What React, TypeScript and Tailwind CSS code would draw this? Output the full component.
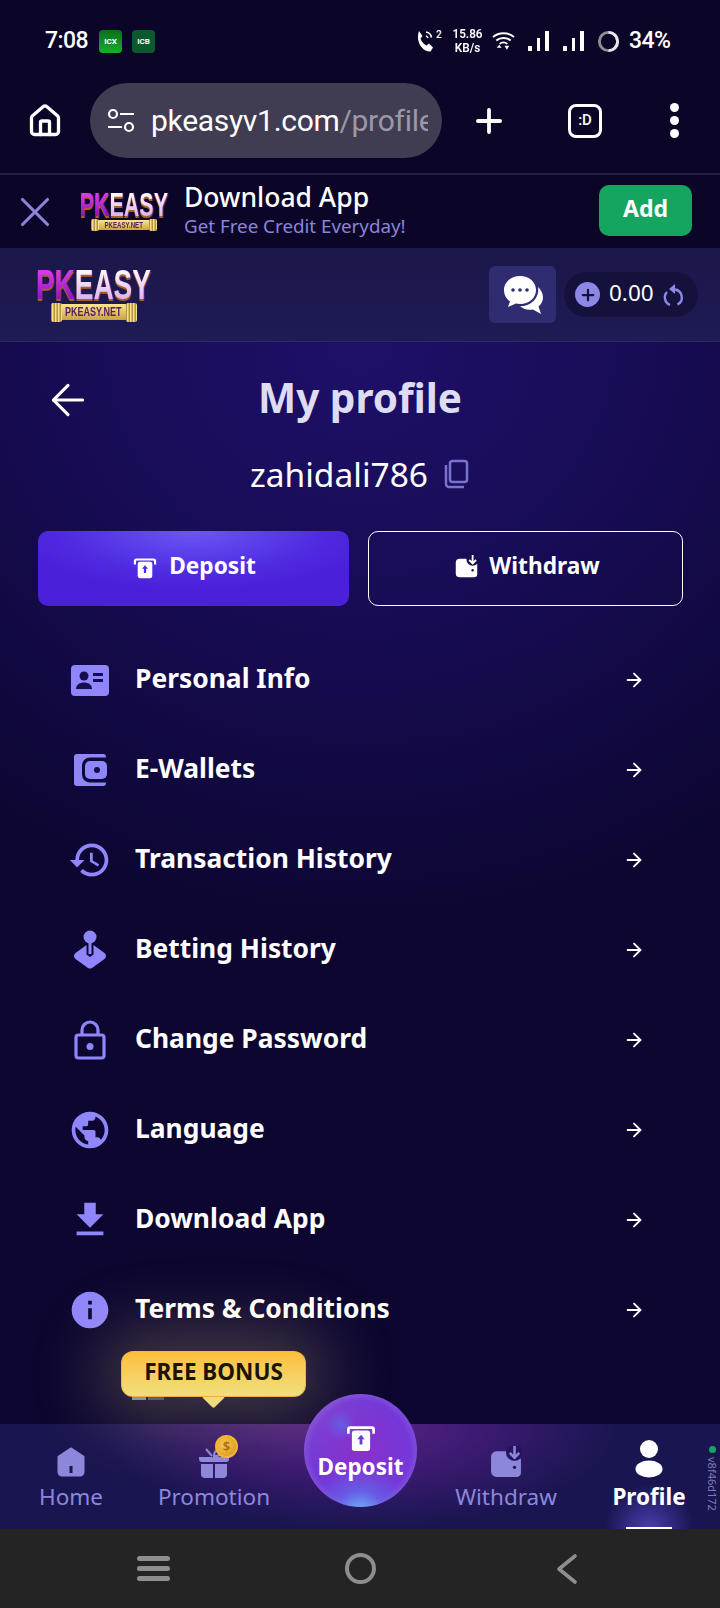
import { Home, Plus, ArrowRight, ArrowLeft, X } from "lucide-react";
import type { ReactNode } from "react";

const NOTO = "font-['Noto_Sans',sans-serif]";

// Ribbed end of the gold bar under the wordmark
function BarCap({ w }: { w: string }) {
  return <span className={`${w} h-full rounded-[2px] bg-[repeating-linear-gradient(90deg,#8f6f22_0px,#f6e08c_1.5px,#c9a440_3px)]`} />;
}

function Logo({ scale }: { scale: "sm" | "lg" }) {
  const lg = scale === "lg";
  return (
    <div className={`flex flex-col items-center ${lg ? "w-[113px]" : "w-[88px]"}`}>
      <div
        className={`flex font-['Liberation_Sans',sans-serif] font-bold scale-x-[0.65] whitespace-nowrap [filter:drop-shadow(0_2px_0_#a8641c)_drop-shadow(1px_0_0_#7a1aa0)] ${
          lg ? "text-[43px] leading-[33px] h-[33px]" : "text-[33px] leading-[25px] h-[25px]"
        }`}
      >
        <span className="bg-gradient-to-b from-[#e23cf5] to-[#8a10b8] bg-clip-text text-transparent">PK</span>
        <span className="bg-gradient-to-b from-white to-[#d9b0ee] bg-clip-text text-transparent">EASY</span>
      </div>
      <div className={`flex items-center ${lg ? "w-[86px] h-[19px] mt-[2px]" : "w-[66px] h-[12px] mt-[2px]"}`}>
        <BarCap w={lg ? "w-[11px]" : "w-[8px]"} />
        <div className="flex-1 h-[85%] flex items-center justify-center overflow-hidden bg-gradient-to-b from-[#f8e690] to-[#c9a440]">
          <span className={`font-['Liberation_Sans',sans-serif] font-bold text-[#5a1a6b] scale-x-[0.72] whitespace-nowrap ${lg ? "text-[12.5px]" : "text-[8.5px]"}`}>
            PKEASY.NET
          </span>
        </div>
        <BarCap w={lg ? "w-[11px]" : "w-[8px]"} />
      </div>
    </div>
  );
}

function Signal() {
  return (
    <div className="flex items-end justify-between h-[20px] w-[21px]">
      <span className="w-[3.5px] h-[5px] bg-white" />
      <span className="w-[3.5px] h-[13px] bg-white" />
      <span className="w-[4px] h-[20px] bg-white" />
    </div>
  );
}

function StatusBar() {
  return (
    <div className="h-[83px] shrink-0 flex items-start justify-between pl-[45px] pr-[50px] pt-[25px] font-['Roboto',sans-serif] text-white">
      <div className="flex items-center h-[32px]">
        <span className="w-[45px] text-[23px] font-medium tracking-tight">7:08</span>
        <span className="w-[23px] h-[23px] ml-[9px] rounded-[4px] bg-gradient-to-b from-[#0a6f1c] to-[#14b02c] text-[8px] font-bold leading-[23px] text-center">ICX</span>
        <span className="w-[23px] h-[23px] ml-[10px] rounded-[4px] bg-[#0b5a2e] text-[8px] font-bold leading-[23px] text-center">ICB</span>
      </div>
      <div className="flex items-center h-[32px]">
        <div className="flex items-start w-[26px]">
          <svg width="20" height="22" viewBox="0 0 20 22" fill="#fff" className="shrink-0">
            <path d="M3 1l3.500 5-2 2.500c1 3 3 5.500 6 7l2.500-2 4 4-2.500 4C7 22-1 12 3 1z" />
            <path d="M10 2c3 .5 5 2.500 5.500 5.500M10 6c1 .3 1.500 1 2 2" fill="none" stroke="#fff" strokeWidth="1.600" />
          </svg>
          <span className="text-[10px] font-medium leading-none">2</span>
        </div>
        <div className="ml-[10px] w-[31px] flex flex-col items-center text-[13px] font-semibold leading-[14px] scale-x-90">
          <span>15.86</span>
          <span>KB/s</span>
        </div>
        <svg width="23" height="22" viewBox="0 0 24 22" fill="none" stroke="#fff" strokeWidth="2" className="ml-[9px]">
          <path d="M1 7c6-5.500 16-5.500 22 0M4.500 10.500c4-3.500 11-3.500 15 0M8 14c2.200-1.800 5.800-1.800 8 0" />
          <path d="M5 18h5l-2.500-3zM13 16h5l-2.500 4z" fill="#fff" stroke="none" />
        </svg>
        <div className="ml-[13px]">
          <Signal />
        </div>
        <div className="ml-[14px]">
          <Signal />
        </div>
        <svg width="23" height="23" viewBox="0 0 24 24" fill="none" strokeWidth="3" className="ml-[13px]">
          <circle cx="12" cy="12" r="9.500" stroke="#8d8d96" />
          <path d="M12 2.500a9.500 9.500 0 0 1 0 19" stroke="#e8e8ee" />
        </svg>
        <span className="ml-[9px] w-[41px] text-[23px] font-medium tracking-tight">34%</span>
      </div>
    </div>
  );
}

function BrowserBar() {
  return (
    <div className="h-[92px] shrink-0 flex items-start border-b-2 border-[#221f43]">
      <div className="w-[90px] h-[75px] flex items-center justify-center">
        <Home className="w-[36px] h-[36px] text-white" strokeWidth={2.2} />
      </div>
      <div className="w-[352px] h-[75px] rounded-full bg-[#403c52] flex items-center pl-[16px] pr-[14px]">
        <svg width="30" height="30" viewBox="0 0 30 30" fill="none" stroke="#fff" strokeWidth="2.200" className="shrink-0">
          <circle cx="7" cy="8" r="4" />
          <path d="M14 8h14M2 21h14" />
          <circle cx="23" cy="21" r="4" />
        </svg>
        <div className="ml-[15px] overflow-hidden whitespace-nowrap font-['Roboto',sans-serif] text-[30px] tracking-[-0.3px] text-white">
          pkeasyv1.com<span className="text-[#9b98a8]">/profile</span>
        </div>
      </div>
      <div className="flex-1 h-[75px] flex items-center">
        <Plus className="w-[38px] h-[38px] ml-[28px] text-white shrink-0" strokeWidth={2.4} />
        <div className="w-[34px] h-[34px] ml-[60px] rounded-[8px] border-[3px] border-white text-white text-[15px] font-['Roboto',sans-serif] font-medium flex items-center justify-center shrink-0">
          :D
        </div>
        <div className="ml-[68px] flex flex-col gap-[4px]">
          <span className="w-[9px] h-[9px] rounded-full bg-white" />
          <span className="w-[9px] h-[9px] rounded-full bg-white" />
          <span className="w-[9px] h-[9px] rounded-full bg-white" />
        </div>
      </div>
    </div>
  );
}

function InstallBanner() {
  return (
    <div className={`h-[73px] shrink-0 flex items-center pl-[10px] pr-[28px] ${NOTO}`}>
      <X className="w-[50px] h-[50px] text-[#8b84d8] shrink-0" strokeWidth={1.5} />
      <div className="ml-[20px]">
        <Logo scale="sm" />
      </div>
      <div className="ml-[16px] flex-1 -mt-[4px]">
        <div className="text-[26.5px] leading-[32px] font-medium text-white">Download App</div>
        <div className="text-[18.8px] leading-[26px] text-[#8b84d8]">Get Free Credit Everyday!</div>
      </div>
      <button className="w-[93px] h-[51px] -mt-[2px] pb-[5px] rounded-[10px] bg-[#16a561] text-white text-[23px] font-bold">Add</button>
    </div>
  );
}

function AppHeader() {
  return (
    <div className={`h-[94px] shrink-0 flex items-center justify-between pl-[37px] pr-[22px] border-b border-[#2c2a66] bg-gradient-to-b from-[#1b1749] to-[#1e1b55] ${NOTO}`}>
      <Logo scale="lg" />
      <div className="flex items-center gap-[8px]">
        <div className="w-[67px] h-[57px] rounded-[6px] bg-[#302c72] flex items-center justify-center">
          <svg width="44" height="42" viewBox="0 0 44 42" fill="#fff">
            <path d="M19 2C10 2 3 8 3 16c0 5 2.500 9 6 11.500L7 33l8-3.500c1.300.3 2.600.5 4 .5 9 0 16-6 16-14S28 2 19 2z" />
            <path d="M37 13c3 3 5 6 5 10.500 0 4-2 7-4.500 9L40 40l-8-4.500c-6 1-10-.5-13-3.500 9 1 20-7 18-19z" />
            <circle cx="12" cy="16" r="1.800" fill="#302c72" />
            <circle cx="19" cy="16" r="1.800" fill="#302c72" />
            <circle cx="26" cy="16" r="1.800" fill="#302c72" />
          </svg>
        </div>
        <div className="w-[134px] h-[45px] rounded-full bg-[#14123c] flex items-center pl-[11px]">
          <span className="w-[25px] h-[25px] rounded-full bg-[#8d87e6] flex items-center justify-center shrink-0">
            <Plus className="w-[18px] h-[18px] text-[#14123c]" strokeWidth={3} />
          </span>
          <span className="ml-[9px] pb-[4px] text-[22.5px] text-white">0.00</span>
          <svg width="24" height="26" viewBox="0 0 24 26" fill="none" stroke="#8d87e6" strokeWidth="2.400" className="ml-[7px] shrink-0">
            <path d="M14 7.500a8 8 0 0 1 2.500 15" />
            <path d="M9 23a8 8 0 0 1-3-13" />
            <path d="M14 2v10l-6-5z" fill="#8d87e6" stroke="none" />
          </svg>
        </div>
      </div>
    </div>
  );
}

const IC = "#8f86fb";

function BadgeIcon() {
  return (
    <svg width="40" height="40" viewBox="0 0 40 40">
      <rect x="1" y="5" width="38" height="31" rx="4" fill={IC} />
      <circle cx="14" cy="16" r="4.500" fill="#170c4f" />
      <path d="M6 29c0-4.500 4-6.500 8-6.500s8 2 8 6.500z" fill="#170c4f" />
      <path d="M23 13h10v3H23zM23 19h10v3H23z" fill="#170c4f" />
    </svg>
  );
}

function WalletIcon() {
  return (
    <svg width="40" height="40" viewBox="0 0 40 40">
      <path d="M7 4h26a3 3 0 0 1 3 3v.5H20a8 8 0 0 0-8 8v9a8 8 0 0 0 8 8h16v.5a3 3 0 0 1-3 3H7a3 3 0 0 1-3-3V7a3 3 0 0 1 3-3z" fill={IC} />
      <rect x="15" y="11" width="22" height="18" rx="5" fill={IC} />
      <circle cx="27" cy="20" r="3" fill="#150b4a" />
    </svg>
  );
}

function JoystickIcon() {
  return (
    <svg width="40" height="40" viewBox="0 0 40 40" fill={IC}>
      <circle cx="20" cy="7" r="6.500" />
      <path d="M18.500 12h3v12h-3z" />
      <path d="M16.500 15v9.500L20 27l3.500-2.500V15l11 8c2 1.300 2 4.500 0 6l-12.500 9c-1.300.7-2.700.7-4 0L5.500 29c-2-1.500-2-4.700 0-6z" />
    </svg>
  );
}

function LockIcon() {
  return (
    <svg width="40" height="40" viewBox="0 0 40 40" fill="none" stroke={IC} strokeWidth="3.200">
      <path d="M12 15V10a8 8 0 0 1 16 0v5" />
      <rect x="6" y="15" width="28" height="23" rx="2.500" />
      <circle cx="20" cy="26.500" r="3.500" fill={IC} stroke="none" />
    </svg>
  );
}

function MuiIcon({ d, size = 44 }: { d: string; size?: number }) {
  return (
    <svg width={size} height={size} viewBox="0 0 24 24" fill={IC}>
      <path d={d} />
    </svg>
  );
}

const HISTORY = "M13 3c-4.970 0-9 4.030-9 9H1l3.890 3.890.07.14L9 12H6c0-3.870 3.130-7 7-7s7 3.130 7 7-3.130 7-7 7c-1.930 0-3.680-.79-4.940-2.060l-1.420 1.420C8.270 19.990 10.510 21 13 21c4.970 0 9-4.030 9-9s-4.030-9-9-9zm-1 5v5l4.280 2.540.72-1.210-3.500-2.080V8H12z";
const GLOBE = "M12 2C6.480 2 2 6.480 2 12s4.480 10 10 10 10-4.480 10-10S17.520 2 12 2zm-1 17.930c-3.950-.49-7-3.850-7-7.930 0-.62.08-1.210.21-1.790L9 15v1c0 1.100.9 2 2 2v1.930zm6.900-2.540c-.26-.81-1-1.390-1.900-1.390h-1v-3c0-.55-.45-1-1-1H8v-2h2c.55 0 1-.45 1-1V7h2c1.100 0 2-.9 2-2v-.41c2.930 1.190 5 4.060 5 7.410 0 2.080-.8 3.970-2.100 5.390z";
const DOWNLOAD = "M19 9h-4V3H9v6H5l7 7 7-7zM5 18v2h14v-2H5z";
const INFO = "M12 2C6.480 2 2 6.480 2 12s4.480 10 10 10 10-4.480 10-10S17.520 2 12 2zm1 15h-2v-6h2v6zm0-8h-2V7h2v2z";

const MENU: { label: string; icon: ReactNode }[] = [
  { label: "Personal Info", icon: <BadgeIcon /> },
  { label: "E-Wallets", icon: <WalletIcon /> },
  { label: "Transaction History", icon: <MuiIcon d={HISTORY} /> },
  { label: "Betting History", icon: <JoystickIcon /> },
  { label: "Change Password", icon: <LockIcon /> },
  { label: "Language", icon: <MuiIcon d={GLOBE} /> },
  { label: "Download App", icon: <MuiIcon d={DOWNLOAD} size={46} /> },
  { label: "Terms & Conditions", icon: <MuiIcon d={INFO} /> },
];

function DepositGlyph({ size, color }: { size: number; color: string }) {
  return (
    <svg width={size} height={size} viewBox="0 0 28 28">
      <path d="M1 11V7a3 3 0 0 1 3-3h20a3 3 0 0 1 3 3v4h-2.500V7.500a1 1 0 0 0-1-1h-19a1 1 0 0 0-1 1V11z" fill="#fff" />
      <rect x="5.500" y="8" width="17" height="19" rx="2.500" fill="#fff" />
      <path d="M14 12l-3.500 4h2.200v5h2.600v-5h2.200z" fill={color} />
    </svg>
  );
}

function WithdrawGlyph({ size, fill, cut }: { size: number; fill: string; cut: string }) {
  return (
    <svg width={size} height={size} viewBox="0 0 30 30">
      <path d="M1 10a5 5 0 0 1 5-5h9l5 3h5a4 4 0 0 1 4 4v13a4 4 0 0 1-4 4H6a5 5 0 0 1-5-5z" fill={fill} />
      <circle cx="23" cy="6" r="8" fill={cut} />
      <path d="M23 0v10M18.500 6.500l4.500 4.500 4.500-4.500" fill="none" stroke={fill} strokeWidth="2.400" />
      <circle cx="23" cy="20" r="1.600" fill={cut} />
    </svg>
  );
}

function ProfileContent() {
  return (
    <div className={`relative flex-1 min-h-0 overflow-hidden bg-[radial-gradient(ellipse_90%_55%_at_50%_0%,#1e1068_0%,#170c55_45%,#0c0630_100%)] bg-[#0c0630] ${NOTO}`}>
      <div className="flex items-center justify-center h-[112px] relative">
        <ArrowLeft className="absolute left-[43px] top-[33px] w-[50px] h-[50px] text-white" strokeWidth={1.5} />
        <h1 className="text-[40.5px] font-bold text-[#dedcf2]">My profile</h1>
      </div>
      <div className="flex items-center justify-center h-[40px]">
        <span className="text-[33.5px] text-white">zahidali786</span>
        <svg width="26" height="30" viewBox="0 0 26 30" fill="none" stroke="#7a72cf" strokeWidth="2.500" className="ml-[16px]">
          <rect x="6" y="2" width="17" height="21" rx="2.500" />
          <path d="M2 6v19a3 3 0 0 0 3 3h15" />
        </svg>
      </div>
      <div className="flex gap-[19px] pl-[38px] pr-[37px] mt-[37px]">
        <button className="flex-1 h-[75px] pb-[4px] pl-[2px] rounded-[10px] bg-[radial-gradient(ellipse_60%_80%_at_50%_0%,#6a57f5_0%,#4f2ae0_70%,#4a20d8_100%)] flex items-center justify-center gap-[12px] text-white text-[22.7px] font-bold">
          <DepositGlyph size={24} color="#4f2ae0" />
          Deposit
        </button>
        <button className="flex-1 h-[75px] pb-[4px] pl-[4px] rounded-[10px] border border-white flex items-center justify-center gap-[11px] text-white text-[22.7px] font-bold">
          <WithdrawGlyph size={23} fill="#fff" cut="#170c55" />
          Withdraw
        </button>
      </div>
      <div className="mt-[29px]">
        {MENU.map((row) => (
          <div key={row.label} className="h-[90px] flex items-center pr-[75px]">
            <div className="w-[135px] pl-[67px] shrink-0">
              <span className="flex items-center justify-center w-[46px] h-[46px]">{row.icon}</span>
            </div>
            <span className="flex-1 pb-[2px] text-[26.4px] font-bold text-white">{row.label}</span>
            <ArrowRight className="w-[22px] h-[22px] text-white" strokeWidth={2} />
          </div>
        ))}
      </div>
    </div>
  );
}

function NavItem({ label, icon, active, className }: { label: string; icon: ReactNode; active?: boolean; className: string }) {
  return (
    <div className={`relative flex flex-col items-center h-full pt-[16px] ${className}`}>
      <div className="h-[38px] flex items-end">{icon}</div>
      <span className={`mt-[4px] text-[22.5px] leading-[30px] whitespace-nowrap ${active ? "font-bold text-white" : "text-[#8d87dc]"}`}>{label}</span>
    </div>
  );
}

function BottomNav() {
  return (
    <div className={`relative h-[105px] shrink-0 flex bg-[radial-gradient(ellipse_260px_105px_at_50%_0%,#5a2288_0%,#3a1a70_50%,transparent_100%)] bg-[#191550] ${NOTO}`}>
      <NavItem
        className="w-[142px]"
        label="Home"
        icon={
          <svg width="32" height="32" viewBox="0 0 32 32" fill="#8d87dc" stroke="#8d87dc" strokeWidth="3" strokeLinejoin="round">
            <path d="M16 3l12 8v15a3 3 0 0 1-3 3H7a3 3 0 0 1-3-3V11z" />
            <rect x="14.500" y="20" width="3" height="7" fill="#191550" stroke="none" />
          </svg>
        }
      />
      <NavItem
        className="w-[144px]"
        label="Promotion"
        icon={
          <div className="relative">
            <svg width="32" height="32" viewBox="0 0 32 32" fill="#8d87dc">
              <path d="M1 11h30v2a3 3 0 0 1-3 3H4a3 3 0 0 1-3-3zM3 18h12v14H7a4 4 0 0 1-4-4zM17 18h12v10a4 4 0 0 1-4 4h-8z" />
              <path d="M8 3l6 7M16 10c0-6 6-8 7-4s-4 4-7 4z" fill="none" stroke="#8d87dc" strokeWidth="2" />
            </svg>
            <span className="absolute -top-[11px] left-[17px] w-[23px] h-[23px] rounded-full border-[2px] border-[#f2b52a] bg-[radial-gradient(circle_at_40%_40%,#f8cb55,#d28c10)] text-[#b06e0a] text-[13px] font-bold leading-[19px] text-center">
              $
            </span>
          </div>
        }
      />
      <div className="flex-1" />
      <NavItem
        className="w-[146px] translate-x-[1px]"
        label="Withdraw"
        icon={<WithdrawGlyph size={32} fill="#8d87dc" cut="#27145f" />}
      />
      <NavItem
        className="w-[142px] overflow-hidden bg-[radial-gradient(ellipse_45px_45px_at_50%_100%,#4b3cb0_0%,transparent_100%)]"
        label="Profile"
        active
        icon={
          <svg width="28" height="38" viewBox="0 0 28 38" fill="#fff">
            <circle cx="14" cy="9" r="9" />
            <ellipse cx="14" cy="29" rx="13.500" ry="8.500" />
          </svg>
        }
      />
      <div className="absolute bottom-0 left-[626px] w-[46px] h-[2px] bg-white" />

      {/* build tag at the right edge */}
      <div className="absolute left-[707px] top-[22px] w-[10px] flex flex-col items-center">
        <span className="w-[7px] h-[7px] rounded-full bg-[#16a561]" />
        <span className="mt-[4px] [writing-mode:vertical-rl] text-[11px] leading-[11px] text-[#7f7ab8]">v8f46d172</span>
      </div>

      {/* raised deposit button */}
      <div className="absolute left-[304px] -top-[30px] w-[113px] h-[113px] pt-[2px] rounded-full bg-[radial-gradient(circle_at_33%_28%,rgba(70,120,255,0.5)_0%,transparent_14%),radial-gradient(circle_at_50%_106%,#6db8f5_0%,rgba(90,120,240,0.55)_18%,transparent_36%),radial-gradient(circle_at_50%_50%,#8a30cc_0%,#7438d8_62%,#a88cf0_100%)] flex flex-col items-center justify-center text-white">
        <DepositGlyph size={30} color="#6a3cd8" />
        <span className="text-[22.5px] leading-[30px] font-bold">Deposit</span>
      </div>

      {/* free bonus bubble */}
      <div className="absolute left-[121px] -top-[73px] w-[185px] h-[46px]">
        <div className="absolute inset-0 rounded-[12px] shadow-[0_0_70px_22px_rgba(255,220,140,0.24)]" />
        <span className="absolute left-[11px] -bottom-[3px] w-[14px] h-[3px] bg-[#d8d8e0]/60" />
        <span className="absolute left-[27px] -bottom-[3px] w-[16px] h-[3px] bg-[#d8d8e0]/30" />
        <span className="absolute left-[84px] -bottom-[8px] w-[17px] h-[17px] rotate-45 rounded-[2px] bg-[#eddc7a]" />
        <div className="relative h-full pb-[4px] rounded-[12px] border border-[#d6a83c]/60 bg-gradient-to-b from-[#fdbf3a] to-[#efdf7c] flex items-center justify-center text-[22.5px] font-bold text-[#1b1408]">
          FREE BONUS
        </div>
      </div>
    </div>
  );
}

function SystemNav() {
  return (
    <div className="h-[79px] shrink-0 bg-[#242424] flex items-center pl-[137px]">
      <div className="flex flex-col gap-[5px] w-[33px]">
        <span className="h-[5px] rounded-full bg-[#8e8e8e]" />
        <span className="h-[5px] rounded-full bg-[#8e8e8e]" />
        <span className="h-[5px] rounded-full bg-[#8e8e8e]" />
      </div>
      <span className="w-[31px] h-[31px] rounded-full border-[4px] border-[#8e8e8e] ml-[175px]" />
      <svg width="24" height="32" viewBox="0 0 24 32" fill="none" stroke="#8e8e8e" strokeWidth="3.600" strokeLinecap="round" strokeLinejoin="round" className="ml-[179px]">
        <path d="M20 3L4 16l16 13" />
      </svg>
    </div>
  );
}

export default function App() {
  return (
    <div className="w-[720px] h-[1608px] flex flex-col overflow-hidden bg-[#0b0628]">
      <StatusBar />
      <BrowserBar />
      <InstallBanner />
      <AppHeader />
      <ProfileContent />
      <BottomNav />
      <SystemNav />
    </div>
  );
}
